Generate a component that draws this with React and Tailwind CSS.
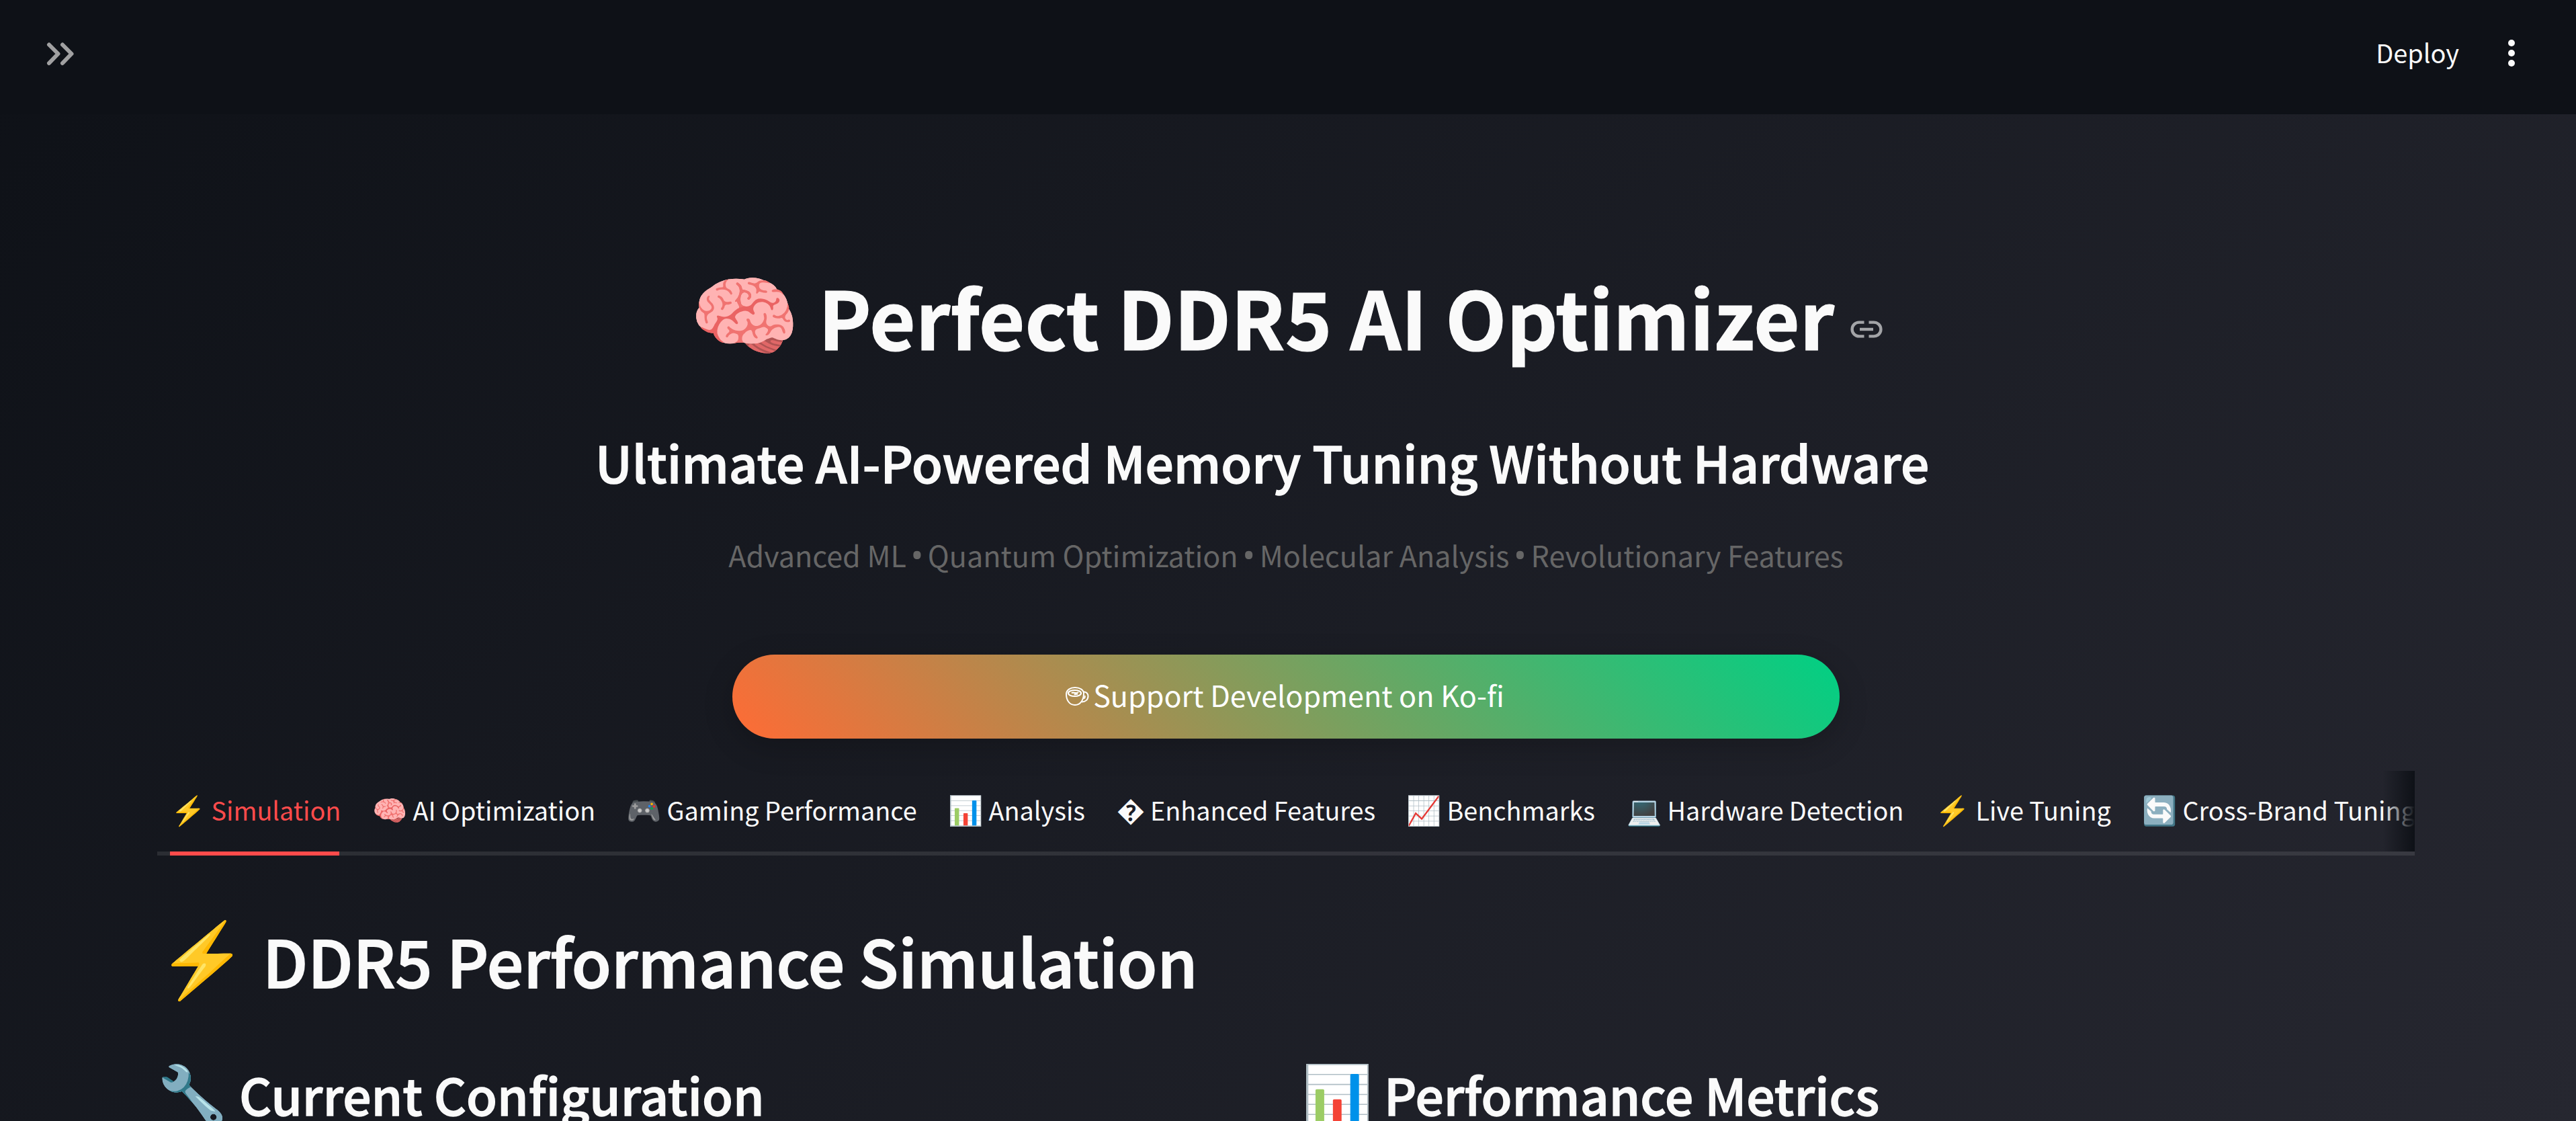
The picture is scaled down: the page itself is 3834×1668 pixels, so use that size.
const tabs = [
  { icon: "⚡", label: "Simulation", width: "w-[252px]", active: true },
  { icon: "🧠", label: "AI Optimization", width: "w-[330px]" },
  { icon: "🎮", label: "Gaming Performance", width: "w-[431px]" },
  { icon: "📊", label: "Analysis", width: "w-[202px]" },
  { icon: "�", label: "Enhanced Features", width: "w-[384px]", narrow: true },
  { icon: "📈", label: "Benchmarks", width: "w-[280px]" },
  { icon: "💻", label: "Hardware Detection", width: "w-[411px]" },
  { icon: "⚡", label: "Live Tuning", width: "w-[260px]" },
  { icon: "🔄", label: "Cross-Brand Tuning", width: "w-[420px]" },
];

const tagline = ["Advanced ML", "Quantum Optimization", "Molecular Analysis", "Revolutionary Features"];

function Emoji({ children, className }) {
  return (
    <span className={"inline-block shrink-0 font-['Noto_Color_Emoji'] leading-none font-normal " + className}>
      {children}
    </span>
  );
}

function Header() {
  return (
    <header className="flex h-[170px] items-start justify-between bg-[#0e1117] pr-[91px] pl-[69px]">
      <svg className="mt-[59px] h-[42px] w-[42px]" viewBox="0 0 42 42" fill="none" stroke="#a0a0a1" strokeWidth="6" strokeLinecap="round" strokeLinejoin="round">
        <path d="M4 7.500 17.500 21 4 35" />
        <path d="M24 7.500 37.500 21 24 35" />
      </svg>
      <div className="flex">
        <span className="mr-[73px] text-[37.9px] leading-[156px]">Deploy</span>
        <svg className="mt-[58px] h-[42px] w-[10px]" viewBox="0 0 10 42" fill="#fafafa">
          <circle cx="5" cy="6" r="5" />
          <circle cx="5" cy="21" r="5" />
          <circle cx="5" cy="36" r="5" />
        </svg>
      </div>
    </header>
  );
}

function LinkIcon() {
  return (
    <svg className="mt-[86px] ml-[24px] h-[26px] w-[48px]" viewBox="0 0 48 26" fill="none" stroke="#a3a4a7" strokeWidth="4.4">
      <path d="M20.500 2.600H13a10.400 10.400 0 0 0 0 20.800h7.500" />
      <path d="M27.500 2.600H35a10.400 10.400 0 0 1 0 20.800h-7.500" />
      <path d="M14 13h20" />
    </svg>
  );
}

function CupIcon() {
  return (
    <svg className="mt-[48px] mr-[6px] h-[28px] w-[35px]" viewBox="0 0 35 28" fill="none" stroke="#fff" strokeWidth="2">
      <path d="M1 11C1 4.500 7 1 14 1s13 3.500 13 9c0 8-4 17-13 17S1 19 1 11Z" />
      <ellipse cx="13.500" cy="9.500" rx="9.500" ry="4.500" strokeWidth="2.200" />
      <path d="M9 9.500c2-3 6 2 10-1.500M13 12c1-1.500 3-1 5-1.500" strokeWidth="2.200" />
      <path d="M26.500 7.500c4-.5 7 2.500 7 6.500 0 5-4 8.500-9.500 8.500" />
      <path d="M27 17.500c1.500-1 2-3 1.500-4.500" />
    </svg>
  );
}

function Tabs() {
  return (
    <div className="relative mt-[48px] h-[126px] overflow-hidden border-b-6 border-[#fafafa]/10">
      <div className="flex gap-12 pl-[19px]">
        {tabs.map((t) => (
          <div key={t.label} className={"flex h-[120px] shrink-0 items-baseline text-[37.8px] leading-[115px] whitespace-nowrap " + t.width + (t.active ? " text-[#ff4b4b]" : "")}>
            {t.narrow ? (
              <span className="w-[52px] shrink-0 pl-[2px] text-[42px] leading-none">{t.icon}</span>
            ) : (
              <Emoji className="w-[61.5px] pl-px text-[42px]">{t.icon}</Emoji>
            )}
            <span>{t.label}</span>
          </div>
        ))}
      </div>
      <div className="absolute top-0 right-0 h-[120px] w-12 bg-linear-to-r from-[#0e1117]/0 to-[#0e1117]" />
    </div>
  );
}

export default function App() {
  return (
    <div className="h-[1668px] w-[3834px] overflow-hidden bg-[linear-gradient(135deg,#0e1117_0%,#262730_100%)] font-['Noto_Sans_CJK_SC','Noto_Color_Emoji',sans-serif] text-[#fafafa]">
      <Header />
      <main className="pr-[240px] pl-[234px]">
        <h1 className="mt-[221px] ml-[792px] flex h-[158px] text-[118.3px] leading-[158px] font-bold whitespace-nowrap [-webkit-text-stroke:1.2px_#fafafa]">
          <span>
            <Emoji className="w-[192px] text-[132px] align-[4px]">🧠</Emoji>Perfect DDR5 AI Optimizer
          </span>
          <LinkIcon />
        </h1>
        <h3 className="mt-[88px] ml-[652px] text-[74.8px] leading-[100px] font-medium whitespace-nowrap [-webkit-text-stroke:1.4px_#fafafa]">
          Ultimate AI-Powered Memory Tuning Without Hardware
        </h3>
        <p className="mt-[50px] text-center text-[43.1px] leading-[76px] whitespace-nowrap text-[#666]">
          {tagline.map((t, i) => (
            <span key={t}>
              {i > 0 && (
                <span className="mx-[6px] inline-block w-[20px] text-center font-['Noto_Sans'] text-[50px] leading-none">
                  <span className="-mx-1">•</span>
                </span>
              )}
              {t}
            </span>
          ))}
        </p>
        <div className="mx-auto mt-[111px] flex h-[125px] w-[1648px] justify-center rounded-full bg-[linear-gradient(45deg,#ff6b35,#00d084)] pr-[3px] text-[43.1px] leading-[119px] text-white shadow-[0_12px_45px_rgba(0,0,0,0.2)]">
          <CupIcon />
          <span>Support Development on Ko-fi</span>
        </div>
        <Tabs />
        <div className="relative -mt-[6px] ml-[19px] h-[6px] w-[252px] bg-[#ff4b4b]" />
        <h2 className="mt-[90px] h-[130px] text-[96.2px] leading-[130px] font-medium whitespace-nowrap [-webkit-text-stroke:1.8px_#fafafa]">
          <Emoji className="w-[157px] text-[108px] align-[4px]">⚡</Emoji>DDR5 Performance Simulation
        </h2>
        <div className="mt-[85px] grid grid-cols-2 gap-12 text-[74.8px] leading-[100px] font-medium whitespace-nowrap [-webkit-text-stroke:1.4px_#fafafa]">
          <h3>
            <Emoji className="w-[122px] text-[84px] align-[2px]">🔧</Emoji>Current Configuration
          </h3>
          <h3>
            <Emoji className="w-[122px] text-[84px] align-[2px]">📊</Emoji>Performance Metrics
          </h3>
        </div>
      </main>
    </div>
  );
}
